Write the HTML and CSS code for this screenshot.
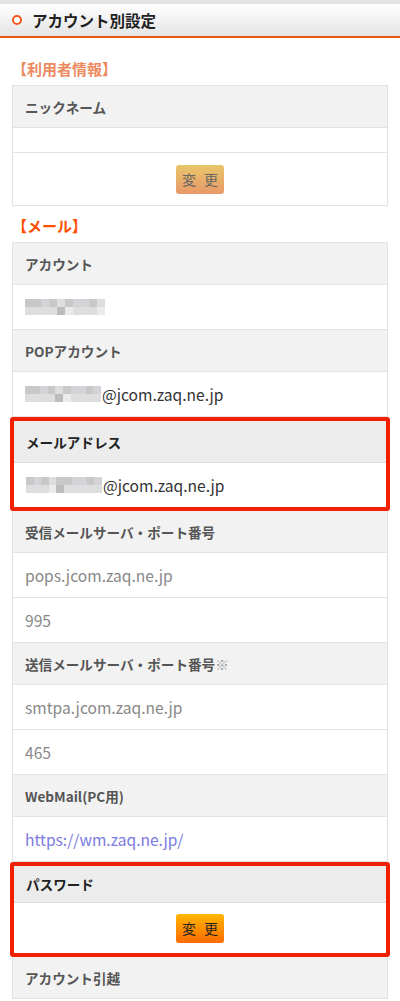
FILE: index.html
```html
<!DOCTYPE html>
<html lang="ja">
<head>
    <meta charset="UTF-8">
    <meta name="viewport" content="width=device-width, initial-scale=1.0">
    <title>アカウント別設定</title>
    <link rel="stylesheet" href="styles.css">
</head>
<body>
    <div class="page-header">
        <span class="ring"></span>
        <h1>アカウント別設定</h1>
    </div>

    <div class="content">
        <h2 class="section-title faded">【利用者情報】</h2>
        <div class="info-table">
            <div class="row head">ニックネーム</div>
            <div class="row empty"></div>
            <div class="row action">
                <button class="btn btn-faded">変 更</button>
            </div>
        </div>

        <h2 class="section-title">【メール】</h2>
        <div class="info-table">
            <div class="row head">アカウント</div>
            <div class="row value">
                <span class="mosaic">
                    <i class="m2"></i><i class="m2"></i><i class="m3"></i><i class="m2"></i><i class="m4"></i><i class="m2"></i><i class="m3"></i><i class="m3"></i><i class="m2"></i><i class="m4"></i>
                    <i class="m4"></i><i class="m4"></i><i class="m4"></i><i class="m4"></i><i class="m1"></i><i class="m5"></i><i class="m4"></i><i class="m4"></i><i class="m4"></i><i class="m5"></i>
                </span>
            </div>
            <div class="row head">POPアカウント</div>
            <div class="row value dark">
                <span class="mosaic narrow">
                    <i class="m2"></i><i class="m2"></i><i class="m3"></i><i class="m2"></i><i class="m4"></i><i class="m2"></i><i class="m3"></i><i class="m3"></i><i class="m2"></i><i class="m3"></i>
                    <i class="m4"></i><i class="m4"></i><i class="m4"></i><i class="m4"></i><i class="m1"></i><i class="m5"></i><i class="m4"></i><i class="m4"></i><i class="m4"></i><i class="m4"></i>
                </span>@jcom.zaq.ne.jp
            </div>

            <div class="marked">
                <div class="row head">メールアドレス</div>
                <div class="row value dark last">
                    <span class="mosaic narrow">
                        <i class="m2"></i><i class="m3"></i><i class="m2"></i><i class="m4"></i><i class="m2"></i><i class="m2"></i><i class="m3"></i><i class="m3"></i><i class="m2"></i><i class="m3"></i>
                        <i class="m4"></i><i class="m4"></i><i class="m4"></i><i class="m5"></i><i class="m1"></i><i class="m4"></i><i class="m4"></i><i class="m4"></i><i class="m4"></i><i class="m4"></i>
                    </span>@jcom.zaq.ne.jp
                </div>
            </div>

            <div class="row head">受信メールサーバ・ポート番号</div>
            <div class="row value">pops.jcom.zaq.ne.jp</div>
            <div class="row value">995</div>
            <div class="row head">送信メールサーバ・ポート番号<span class="note">※</span></div>
            <div class="row value">smtpa.jcom.zaq.ne.jp</div>
            <div class="row value">465</div>
            <div class="row head">WebMail(PC用)</div>
            <div class="row value"><a class="link" href="#">https://wm.zaq.ne.jp/</a></div>

            <div class="marked">
                <div class="row head short">パスワード</div>
                <div class="row action last">
                    <button class="btn">変 更</button>
                </div>
            </div>

            <div class="row head">アカウント引越</div>
        </div>
    </div>
</body>
</html>
```

FILE: styles.css
```css
body {
    margin: 0;
    font-family: "Noto Sans CJK JP", "Noto Sans", sans-serif;
    color: #333;
    background-color: #fff;
}
.page-header {
    display: flex;
    align-items: center;
    height: 32px;
    padding-left: 12px;
    border-top: 4px solid #e4e4e4;
    border-bottom: 2px solid #e55a12;
    background: linear-gradient(#ffffff, #e4e4e4);
}
.ring {
    flex: none;
    width: 6px;
    height: 6px;
    border: 2.5px solid #f05a1e;
    border-radius: 50%;
    background-color: #fff;
    margin-right: 10px;
}
h1 {
    margin: 0;
    font-size: 15.5px;
    font-weight: bold;
    color: #222;
}
.content {
    padding: 0 12px;
}
.section-title {
    margin: 0;
    padding: 9px 0 5px;
    font-size: 15px;
    font-weight: bold;
    line-height: 22px;
    color: #ff4f00;
}
.section-title.faded {
    color: #ec8a60;
    padding-top: 20px;
    padding-bottom: 5px;
}
.info-table {
    border: 1px solid #e3e3e3;
    background-color: #fff;
}
.row {
    display: flex;
    align-items: center;
    padding: 0 12px;
    border-bottom: 1px solid #e3e3e3;
}
.row.last {
    border-bottom: none;
}
.info-table > .row:last-child {
    border-bottom: none;
}
.head {
    height: 41px;
    background-color: #f2f2f2;
    font-size: 13.6px;
    font-weight: bold;
    color: #555;
}
.head.short {
    height: 36px;
}
.head .note {
    font-weight: normal;
    color: #999;
}
.value {
    height: 44px;
    font-size: 15.6px;
    color: #888;
}
.value.dark {
    color: #333;
}
.empty {
    height: 24px;
}
.action {
    justify-content: center;
    height: 52px;
}
.marked {
    margin: 0 -3px;
    border: 4px solid #f02000;
    border-radius: 3px;
}
.marked .head {
    background-color: #ececec;
    color: #222;
    border-bottom-color: #dcdcdc;
}
.marked .action {
    height: 50px;
}
.mosaic {
    display: grid;
    grid-template-columns: repeat(10, 8px);
    grid-auto-rows: 8px;
    margin-right: 1px;
}
.mosaic.narrow {
    grid-template-columns: repeat(10, 7.6px);
}
.mosaic i {
    display: block;
}
.m1 { background-color: #bcbcbc; }
.m2 { background-color: #c8c8c8; }
.m3 { background-color: #d4d4d8; }
.m4 { background-color: #dedede; }
.m5 { background-color: #ebebeb; }
.link {
    color: #7a7ae0;
    text-decoration: none;
}
.btn {
    width: 48px;
    height: 29px;
    padding: 0;
    border: none;
    border-radius: 3px;
    font-family: "Noto Sans CJK JP", sans-serif;
    font-size: 14px;
    word-spacing: 5px;
    color: #222;
    background: linear-gradient(#ffb800, #ff6a00);
    cursor: pointer;
}
.btn-faded {
    color: #666;
    background: linear-gradient(#e9c66a, #e89868);
}
```
